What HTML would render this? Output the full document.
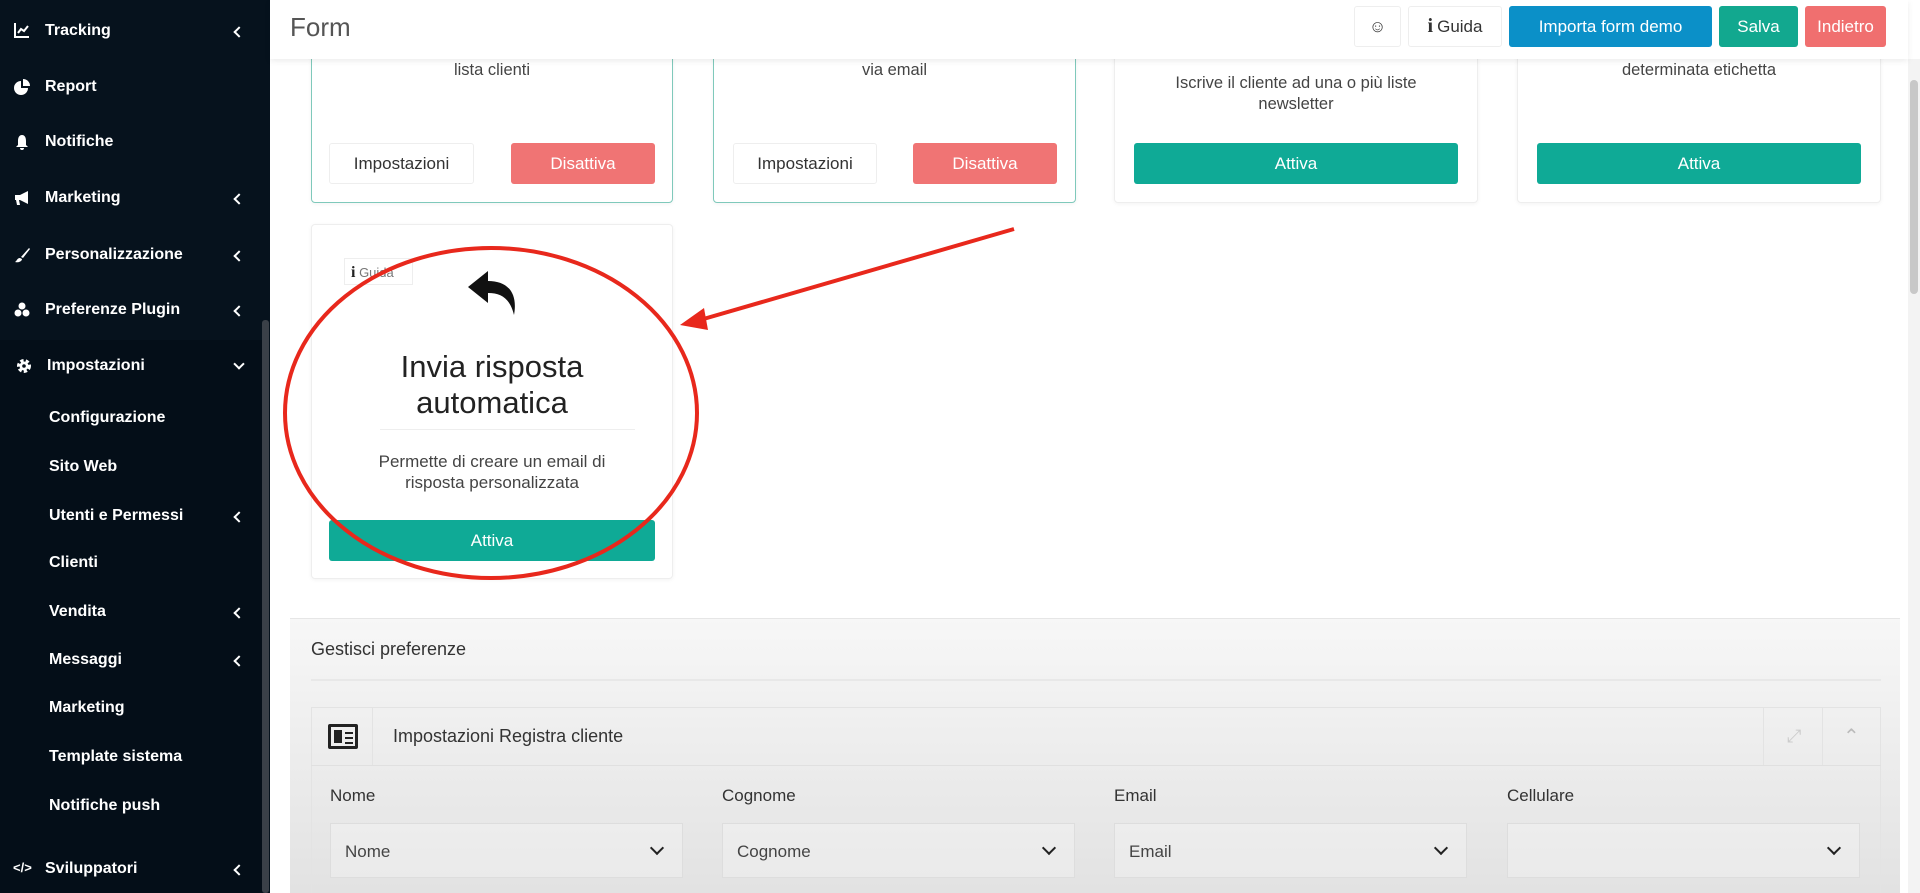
<!DOCTYPE html>
<html><head><meta charset="utf-8"><style>
*{box-sizing:border-box;margin:0;padding:0}
body{width:1920px;height:893px;overflow:hidden;font-family:"Liberation Sans",sans-serif;background:#fff;position:relative;color:#333}
.sb{position:absolute;left:0;top:0;width:270px;height:893px;background:#06121d}
.sb .thumb{position:absolute;left:262px;top:320px;width:7px;height:573px;background:#3a4048;border-radius:3px}
.it{position:absolute;color:#fff;font-size:16px;font-weight:bold;left:45px}
.sub{left:49px;font-size:16px}
.ic{position:absolute;left:14px;width:16px;height:16px}
.ch{position:absolute;left:235px;width:8px;height:8px;border-left:2.5px solid #fff;border-bottom:2.5px solid #fff;transform:rotate(45deg)}
.hdr{position:absolute;left:270px;top:0;width:1638px;height:59px;background:#fff;box-shadow:0 2px 6px rgba(0,0,0,.08);z-index:3}
.hdr .t{position:absolute;left:20px;top:12px;font-size:26px;color:#555}
.b{position:absolute;top:6px;height:41px;border-radius:3px;display:flex;align-items:center;justify-content:center;font-size:17px;color:#fff}
.card{position:absolute;background:#fff;border:1px solid #eee;border-radius:4px;box-shadow:0 1px 4px rgba(0,0,0,.05)}
.card.on{border:1.5px solid #7fc9bb}
.txt{position:absolute;text-align:center;font-size:16.5px;color:#444;line-height:21px}
.btn{position:absolute;height:41px;border-radius:3px;display:flex;align-items:center;justify-content:center;font-size:17px}
.red{background:#f07474;color:#fff}
.grn{background:#0faa96;color:#fff}
.wh{background:#fff;border:1px solid #eee;color:#333}
.low{position:absolute;left:290px;top:618px;width:1610px;height:275px;background:linear-gradient(#f7f7f7,#e2e2e2);overflow:hidden}
.lbl{position:absolute;top:786px;font-size:17px;color:#333}
.sel{position:absolute;top:823px;width:353px;height:55px;border:1px solid #ddd;background:rgba(255,255,255,.25);font-size:17px;padding:18px 14px;color:#444}
.sel:after{content:"";position:absolute;right:20px;top:19px;width:8px;height:8px;border-right:2px solid #222;border-bottom:2px solid #222;transform:rotate(45deg)}
</style></head><body>
<div class="sb"><div class="thumb"></div>
<svg class="ic" style="top:22px" viewBox="0 0 16 16"><path d="M1 1V15H15" stroke="#fff" stroke-width="2" fill="none"/><path d="M4 11L7 7L10 9L14 4" stroke="#fff" stroke-width="2" fill="none"/></svg>
<div class="it" style="top:22px">Tracking</div><div class="ch" style="top:28px"></div>
<svg class="ic" style="top:79px" viewBox="0 0 16 16"><path d="M7 2A7 7 0 1 0 14 9H7Z" fill="#fff"/><path d="M9 0A7 7 0 0 1 16 7H9Z" fill="#fff"/></svg>
<div class="it" style="top:78px">Report</div>
<svg class="ic" style="top:134px" viewBox="0 0 16 16"><path d="M8 1C5 1 4 4 4 7V11L2 13H14L12 11V7C12 4 11 1 8 1Z M6 14H10A2 2 0 0 1 6 14Z" fill="#fff"/></svg>
<div class="it" style="top:133px">Notifiche</div>
<svg class="ic" style="top:190px" viewBox="0 0 16 16"><path d="M1 5H6L14 1V14L6 10H5L6 15H3L2 10H1Z" fill="#fff"/></svg>
<div class="it" style="top:189px">Marketing</div><div class="ch" style="top:195px"></div>
<svg class="ic" style="top:247px" viewBox="0 0 16 16"><path d="M15 1L7 10L9 11L16 2Z M6 11C3 11 3 14 1 15C5 16 8 14 8 12Z" fill="#fff"/></svg>
<div class="it" style="top:246px">Personalizzazione</div><div class="ch" style="top:252px"></div>
<svg class="ic" style="top:302px" viewBox="0 0 16 16"><circle cx="8" cy="4" r="3.5" fill="#fff"/><circle cx="4" cy="11" r="3.5" fill="#fff"/><circle cx="12" cy="11" r="3.5" fill="#fff"/></svg>
<div class="it" style="top:301px">Preferenze Plugin</div><div class="ch" style="top:307px"></div>
<div style="position:absolute;left:0;top:340px;width:262px;height:553px;background:#040e18"></div>
<svg class="ic" style="top:358px;left:16px" viewBox="0 0 16 16"><circle cx="8" cy="8" r="5" fill="none" stroke="#fff" stroke-width="4" stroke-dasharray="3 2"/><circle cx="8" cy="8" r="4.5" fill="#fff"/><circle cx="8" cy="8" r="1.8" fill="#040e18"/></svg>
<div class="it" style="top:357px;left:47px">Impostazioni</div><div class="ch" style="top:360px;transform:rotate(-45deg)"></div>
<div class="it sub" style="top:409px">Configurazione</div>
<div class="it sub" style="top:458px">Sito Web</div>
<div class="it sub" style="top:507px">Utenti e Permessi</div><div class="ch" style="top:513px"></div>
<div class="it sub" style="top:554px">Clienti</div>
<div class="it sub" style="top:603px">Vendita</div><div class="ch" style="top:609px"></div>
<div class="it sub" style="top:651px">Messaggi</div><div class="ch" style="top:657px"></div>
<div class="it sub" style="top:699px">Marketing</div>
<div class="it sub" style="top:748px">Template sistema</div>
<div class="it sub" style="top:797px">Notifiche push</div>
<div style="position:absolute;left:13px;top:860px;color:#fff;font-size:13px;font-weight:bold">&lt;/&gt;</div><div class="it" style="top:860px">Sviluppatori</div><div class="ch" style="top:866px"></div>
</div>

<div class="hdr"><div class="t">Form</div>
<div class="b" style="left:1084px;width:47px;background:#fff;border:1px solid #eee;color:#333">☺</div>
<div class="b" style="left:1138px;width:94px;background:#fff;border:1px solid #eee;color:#333"><b style="font-family:'Liberation Serif',serif;font-size:20px;margin-right:4px">i</b>Guida</div>
<div class="b" style="left:1239px;width:203px;background:#0b90c8">Importa form demo</div>
<div class="b" style="left:1449px;width:79px;background:#12a88f">Salva</div>
<div class="b" style="left:1535px;width:81px;background:#f06f6f">Indietro</div>
</div>

<div style="position:absolute;left:1908px;top:59px;width:12px;height:834px;background:#f3f3f3"></div>
<div style="position:absolute;left:1910px;top:80px;width:8px;height:214px;background:#c8c8c8;border-radius:4px"></div>

<div class="card on" style="left:311px;top:40px;width:362px;height:163px"></div>
<div class="txt" style="left:311px;width:362px;top:60px">lista clienti</div>
<div class="btn wh" style="left:329px;top:143px;width:145px">Impostazioni</div>
<div class="btn red" style="left:511px;top:143px;width:144px">Disattiva</div>
<div class="card on" style="left:713px;top:40px;width:363px;height:163px"></div>
<div class="txt" style="left:713px;width:363px;top:60px">via email</div>
<div class="btn wh" style="left:733px;top:143px;width:144px">Impostazioni</div>
<div class="btn red" style="left:913px;top:143px;width:144px">Disattiva</div>
<div class="card" style="left:1114px;top:40px;width:364px;height:163px"></div>
<div class="txt" style="left:1114px;width:364px;top:73px">Iscrive il cliente ad una o più liste<br>newsletter</div>
<div class="btn grn" style="left:1134px;top:143px;width:324px">Attiva</div>
<div class="card" style="left:1517px;top:40px;width:364px;height:163px"></div>
<div class="txt" style="left:1517px;width:364px;top:60px">determinata etichetta</div>
<div class="btn grn" style="left:1537px;top:143px;width:324px">Attiva</div>

<div class="card" style="left:311px;top:224px;width:362px;height:355px"></div>
<div style="position:absolute;left:344px;top:258px;width:69px;height:27px;border:1px solid #eee;font-size:13px;color:#777;padding:5px 6px"><b style="font-family:'Liberation Serif',serif;color:#222;font-size:16px">i</b> Guida</div>
<svg style="position:absolute;left:466px;top:269px" width="56" height="48" viewBox="0 0 56 48"><path d="M22 2 L2 18 L22 34 V24 C36 24 44 30 48 46 C52 24 42 12 22 12 Z" fill="#111"/></svg>
<div class="txt" style="left:311px;width:362px;top:349px;font-size:31px;line-height:36px;color:#222">Invia risposta<br>automatica</div>
<div style="position:absolute;left:380px;top:429px;width:255px;height:1px;background:#eee"></div>
<div class="txt" style="left:311px;width:362px;top:451px;font-size:17px">Permette di creare un email di<br>risposta personalizzata</div>
<div class="btn grn" style="left:329px;top:520px;width:326px">Attiva</div>

<svg style="position:absolute;left:0;top:0;z-index:5" width="1920" height="893"><ellipse cx="491" cy="413" rx="206" ry="165" fill="none" stroke="#e8281c" stroke-width="4"/><line x1="1014" y1="229" x2="700" y2="320" stroke="#e8281c" stroke-width="4"/><path d="M680 325 L704 308 L708 330 Z" fill="#e8281c"/></svg>

<div class="low">
<div style="position:absolute;left:0;top:0;width:1610px;height:1px;background:#e6e6e6"></div>
<div style="position:absolute;left:21px;top:21px;font-size:18px;color:#333">Gestisci preferenze</div>
<div style="position:absolute;left:21px;top:61px;width:1570px;height:2px;background:#e8e8e8"></div>
<div style="position:absolute;left:21px;top:89px;width:1570px;height:200px;border:1px solid #e3e3e3"></div>
<div style="position:absolute;left:21px;top:147px;width:1570px;height:1px;background:#e0e0e0"></div>
<div style="position:absolute;left:82px;top:89px;width:1px;height:58px;background:#e3e3e3"></div>
<div style="position:absolute;left:1473px;top:89px;width:1px;height:58px;background:#e3e3e3"></div>
<div style="position:absolute;left:1532px;top:89px;width:1px;height:58px;background:#e3e3e3"></div>
<div style="position:absolute;left:38px;top:106px;width:30px;height:25px;border:3px solid #222;border-radius:2px"><div style="position:absolute;left:3px;top:3px;width:8px;height:13px;background:#222"></div><div style="position:absolute;left:14px;top:5px;width:8px;height:2px;background:#222;box-shadow:0 5px #222,0 10px #222"></div></div>
<div style="position:absolute;left:103px;top:108px;font-size:18px;color:#333">Impostazioni Registra cliente</div>
<div style="position:absolute;left:1497px;top:108px;color:#ccc;font-size:18px">⤢</div>
<div style="position:absolute;left:1553px;top:106px;color:#bbb;font-size:20px">⌃</div>
</div>
<div class="lbl" style="left:330px">Nome</div><div class="lbl" style="left:722px">Cognome</div><div class="lbl" style="left:1114px">Email</div><div class="lbl" style="left:1507px">Cellulare</div>
<div class="sel" style="left:330px">Nome</div><div class="sel" style="left:722px">Cognome</div><div class="sel" style="left:1114px">Email</div><div class="sel" style="left:1507px"></div>
</body></html>
